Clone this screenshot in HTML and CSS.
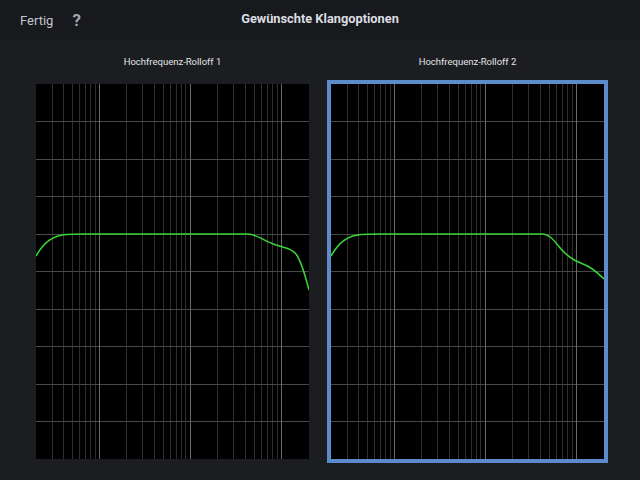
FILE: index.html
```html
<!DOCTYPE html>
<html lang="de">
<head>
<meta charset="utf-8">
<title>Gewünschte Klangoptionen</title>
<link rel="stylesheet" href="styles.css">
</head>
<body>
<header class="topbar">
  <span class="done">Fertig</span>
  <span class="help">?</span>
  <h1 class="title">Gewünschte Klangoptionen</h1>
</header>
<main class="options">
  <section class="option">
    <div class="label">Hochfrequenz-Rolloff 1</div>
    <div class="frame">
      <svg class="chart" viewBox="0 0 273 375" preserveAspectRatio="none">
        <g class="minor">
          <line x1="16.5" y1="0" x2="16.5" y2="375"/><line x1="27.5" y1="0" x2="27.5" y2="375"/><line x1="36.5" y1="0" x2="36.5" y2="375"/><line x1="43.5" y1="0" x2="43.5" y2="375"/><line x1="49.5" y1="0" x2="49.5" y2="375"/><line x1="54.5" y1="0" x2="54.5" y2="375"/><line x1="59.5" y1="0" x2="59.5" y2="375"/>
          <line x1="90.5" y1="0" x2="90.5" y2="375"/><line x1="106.5" y1="0" x2="106.5" y2="375"/><line x1="118.5" y1="0" x2="118.5" y2="375"/><line x1="127.5" y1="0" x2="127.5" y2="375"/><line x1="134.5" y1="0" x2="134.5" y2="375"/><line x1="140.5" y1="0" x2="140.5" y2="375"/><line x1="145.5" y1="0" x2="145.5" y2="375"/><line x1="149.5" y1="0" x2="149.5" y2="375"/>
          <line x1="181.5" y1="0" x2="181.5" y2="375"/><line x1="197.5" y1="0" x2="197.5" y2="375"/><line x1="209.5" y1="0" x2="209.5" y2="375"/><line x1="218.5" y1="0" x2="218.5" y2="375"/><line x1="225.5" y1="0" x2="225.5" y2="375"/><line x1="231.5" y1="0" x2="231.5" y2="375"/><line x1="236.5" y1="0" x2="236.5" y2="375"/><line x1="241.5" y1="0" x2="241.5" y2="375"/>
        </g>
        <g class="hline">
          <line x1="0" y1="37.5" x2="273" y2="37.5"/><line x1="0" y1="75.5" x2="273" y2="75.5"/><line x1="0" y1="112.5" x2="273" y2="112.5"/><line x1="0" y1="150.5" x2="273" y2="150.5"/><line x1="0" y1="187.5" x2="273" y2="187.5"/><line x1="0" y1="225.5" x2="273" y2="225.5"/><line x1="0" y1="262.5" x2="273" y2="262.5"/><line x1="0" y1="300.5" x2="273" y2="300.5"/><line x1="0" y1="337.5" x2="273" y2="337.5"/>
        </g>
        <g class="major">
          <line x1="63.5" y1="0" x2="63.5" y2="375"/><line x1="154.5" y1="0" x2="154.5" y2="375"/><line x1="245.5" y1="0" x2="245.5" y2="375"/>
        </g>
        <path class="curve" d="M0,172 C8,158 16,152 30,150.5 L45,150 L212,150 C220,150 228,157 240,161 C250,164 256,165 260,170 C266,178 270,195 273,206"/>
      </svg>
    </div>
  </section>
  <section class="option">
    <div class="label">Hochfrequenz-Rolloff 2</div>
    <div class="frame selected">
      <svg class="chart" viewBox="0 0 273 375" preserveAspectRatio="none">
        <g class="minor">
          <line x1="16.5" y1="0" x2="16.5" y2="375"/><line x1="27.5" y1="0" x2="27.5" y2="375"/><line x1="36.5" y1="0" x2="36.5" y2="375"/><line x1="43.5" y1="0" x2="43.5" y2="375"/><line x1="49.5" y1="0" x2="49.5" y2="375"/><line x1="54.5" y1="0" x2="54.5" y2="375"/><line x1="59.5" y1="0" x2="59.5" y2="375"/>
          <line x1="90.5" y1="0" x2="90.5" y2="375"/><line x1="106.5" y1="0" x2="106.5" y2="375"/><line x1="118.5" y1="0" x2="118.5" y2="375"/><line x1="127.5" y1="0" x2="127.5" y2="375"/><line x1="134.5" y1="0" x2="134.5" y2="375"/><line x1="140.5" y1="0" x2="140.5" y2="375"/><line x1="145.5" y1="0" x2="145.5" y2="375"/><line x1="149.5" y1="0" x2="149.5" y2="375"/>
          <line x1="181.5" y1="0" x2="181.5" y2="375"/><line x1="197.5" y1="0" x2="197.5" y2="375"/><line x1="209.5" y1="0" x2="209.5" y2="375"/><line x1="218.5" y1="0" x2="218.5" y2="375"/><line x1="225.5" y1="0" x2="225.5" y2="375"/><line x1="231.5" y1="0" x2="231.5" y2="375"/><line x1="236.5" y1="0" x2="236.5" y2="375"/><line x1="241.5" y1="0" x2="241.5" y2="375"/>
        </g>
        <g class="hline">
          <line x1="0" y1="37.5" x2="273" y2="37.5"/><line x1="0" y1="75.5" x2="273" y2="75.5"/><line x1="0" y1="112.5" x2="273" y2="112.5"/><line x1="0" y1="150.5" x2="273" y2="150.5"/><line x1="0" y1="187.5" x2="273" y2="187.5"/><line x1="0" y1="225.5" x2="273" y2="225.5"/><line x1="0" y1="262.5" x2="273" y2="262.5"/><line x1="0" y1="300.5" x2="273" y2="300.5"/><line x1="0" y1="337.5" x2="273" y2="337.5"/>
        </g>
        <g class="major">
          <line x1="63.5" y1="0" x2="63.5" y2="375"/><line x1="154.5" y1="0" x2="154.5" y2="375"/><line x1="245.5" y1="0" x2="245.5" y2="375"/>
        </g>
        <path class="curve" d="M0,172 C8,158 16,152 30,150.5 L45,150 L211,150 C218,150 222,155 230,165 C238,174 245,177 252,180 C260,183 266,188 273,195"/>
      </svg>
    </div>
  </section>
</main>
</body>
</html>
```

FILE: styles.css
```css
html, body {
  margin: 0;
  padding: 0;
}
body {
  width: 640px;
  height: 480px;
  background: #1b1d21;
  font-family: Roboto, "Liberation Sans", sans-serif;
  overflow: hidden;
}
.topbar {
  height: 40px;
  background: #17191d;
  display: flex;
  align-items: center;
  position: relative;
}
.done {
  margin-left: 20px;
  font-size: 13px;
  color: #c4c7cc;
}
.help {
  margin-left: 19px;
  font-size: 17px;
  font-weight: bold;
  color: #a3a6ab;
}
.title {
  position: absolute;
  left: 0;
  right: 0;
  top: 0;
  margin: 0;
  line-height: 38px;
  text-align: center;
  font-size: 12.8px;
  font-weight: bold;
  color: #dcdee2;
  pointer-events: none;
}
.options {
  display: flex;
  padding: 0 25px;
}
.option {
  width: 295px;
  display: flex;
  flex-direction: column;
  align-items: center;
}
.label {
  margin-top: 14px;
  line-height: 16px;
  height: 16px;
  margin-bottom: 10px;
  font-size: 9.5px;
  color: #e2e4e7;
}
.frame {
  border: 4px solid transparent;
  width: 273px;
  height: 375px;
}
.frame.selected {
  border-color: #5c8bcb;
}
.chart {
  display: block;
  width: 273px;
  height: 375px;
  background: #000;
}
.minor line {
  stroke: #2f2f2f;
  stroke-width: 1;
}
.hline line {
  stroke: #484848;
  stroke-width: 1;
}
.major line {
  stroke: #6a6a6a;
  stroke-width: 1;
}
.curve {
  fill: none;
  stroke: #36d436;
  stroke-width: 1.6;
}
```
